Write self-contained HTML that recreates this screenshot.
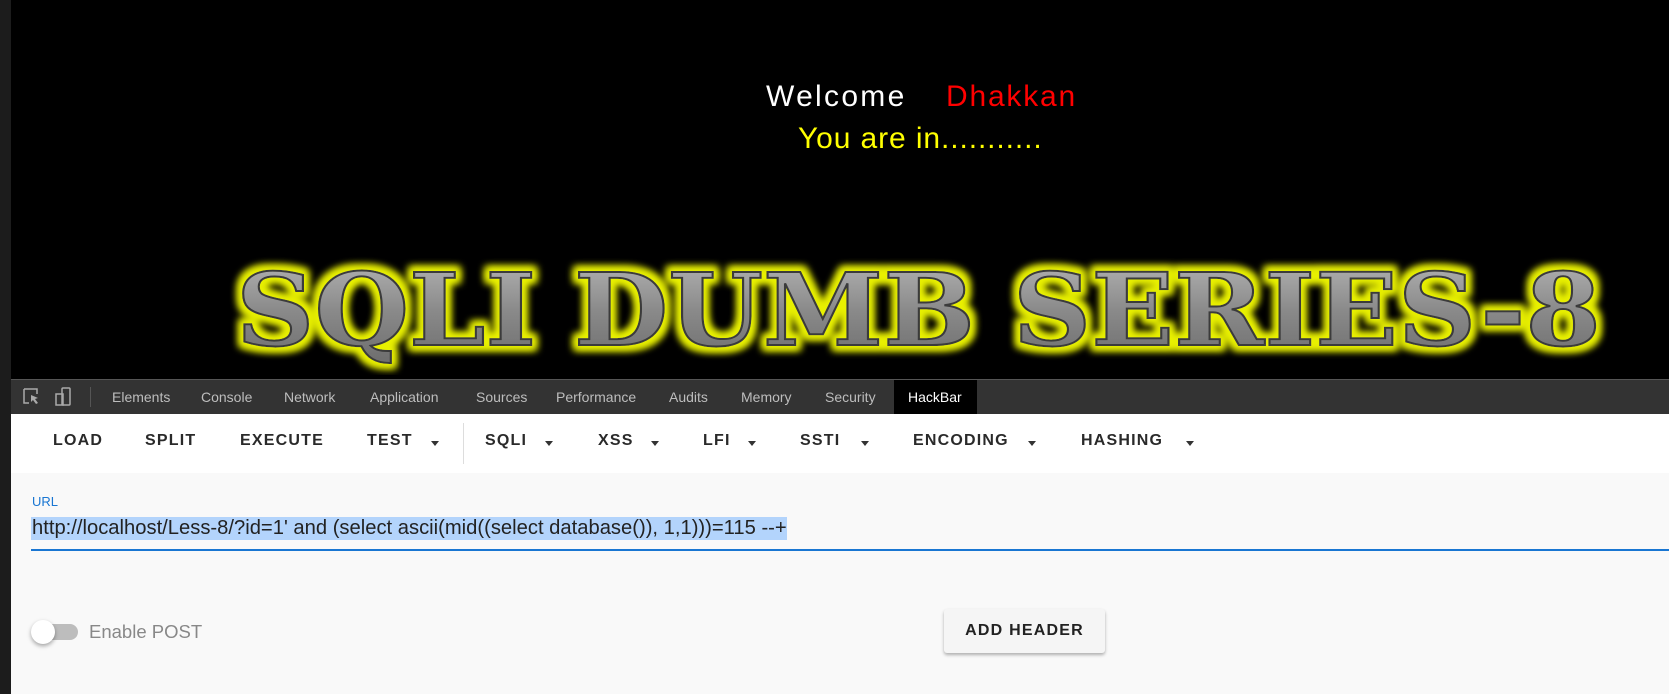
<!DOCTYPE html>
<html><head><meta charset="utf-8"><style>
*{margin:0;padding:0;box-sizing:border-box}
body{width:1669px;height:694px;overflow:hidden;background:#000;font-family:"Liberation Sans",sans-serif;position:relative}
.a{position:absolute;white-space:nowrap}
.tab{position:absolute;top:380px;height:34px;line-height:34px;color:#bdbdbd;font-size:14px}
.btn{position:absolute;top:432px;font-size:16px;font-weight:bold;letter-spacing:1.2px;color:#2a2a2a}
.arr{position:absolute;top:441px;width:0;height:0;border-left:4px solid transparent;border-right:4px solid transparent;border-top:5px solid #333}
</style></head><body>
<div class="a" style="left:0;top:0;width:11px;height:694px;background:#1c1c1c"></div>
<div class="a" style="left:766px;top:80px;font-size:30px;color:#fff;letter-spacing:2.3px">Welcome</div>
<div class="a" style="left:946px;top:80px;font-size:30px;color:#f00;letter-spacing:1.8px">Dhakkan</div>
<div class="a" style="left:798px;top:122px;font-size:30px;color:#ff0;letter-spacing:0.9px">You are in...........</div>
<svg class="a" style="left:220px;top:245px" width="1420" height="130">
<defs>
<linearGradient id="g" x1="0" y1="0" x2="0" y2="1"><stop offset="0" stop-color="#b8b8b8"/><stop offset="0.5" stop-color="#8a8a8a"/><stop offset="1" stop-color="#6a6a6a"/></linearGradient>
<filter id="f" x="-5%" y="-30%" width="110%" height="160%"><feMorphology in="SourceAlpha" operator="dilate" radius="4" result="d"/><feGaussianBlur in="d" stdDeviation="4" result="b"/><feFlood flood-color="#e8f000"/><feComposite in2="b" operator="in" result="y"/><feMerge><feMergeNode in="y"/><feMergeNode in="y"/><feMergeNode in="SourceGraphic"/></feMerge></filter>
</defs>
<text x="16" y="100" font-family="DejaVu Serif" font-weight="bold" font-size="100" textLength="1365" lengthAdjust="spacingAndGlyphs" fill="url(#g)" stroke="#3a3a3a" stroke-width="2" filter="url(#f)">SQLI DUMB SERIES-8</text>
</svg>
<div class="a" style="left:11px;top:379px;width:1658px;height:35px;background:#333;border-top:1px solid #555"></div>
<svg class="a" style="left:22px;top:387px" width="50" height="20"><path d="M2 2h13v5M2 2v14h5" fill="none" stroke="#aaa" stroke-width="1.5"/><path d="M9 8l7 3-3 1 3 4-2 1-3-4-2 2z" fill="#aaa"/><rect x="40" y="1" width="8" height="17" rx="1" fill="none" stroke="#aaa" stroke-width="1.5"/><rect x="34" y="7" width="7" height="11" fill="none" stroke="#aaa" stroke-width="1.5"/></svg>
<div class="a" style="left:90px;top:387px;width:1px;height:20px;background:#555"></div>
<div class="tab" style="left:112px">Elements</div>
<div class="tab" style="left:201px">Console</div>
<div class="tab" style="left:284px">Network</div>
<div class="tab" style="left:370px">Application</div>
<div class="tab" style="left:476px">Sources</div>
<div class="tab" style="left:556px">Performance</div>
<div class="tab" style="left:669px">Audits</div>
<div class="tab" style="left:741px">Memory</div>
<div class="tab" style="left:825px">Security</div>
<div class="tab" style="left:894px;width:83px;background:#000;color:#fff;padding-left:14px">HackBar</div>
<div class="a" style="left:11px;top:414px;width:1658px;height:59px;background:#fff"></div>
<div class="btn" style="left:53px">LOAD</div>
<div class="btn" style="left:145px">SPLIT</div>
<div class="btn" style="left:240px">EXECUTE</div>
<div class="btn" style="left:367px">TEST</div><div class="arr" style="left:431px"></div>
<div class="a" style="left:463px;top:423px;width:1px;height:41px;background:#ddd"></div>
<div class="btn" style="left:485px">SQLI</div><div class="arr" style="left:545px"></div>
<div class="btn" style="left:598px">XSS</div><div class="arr" style="left:651px"></div>
<div class="btn" style="left:703px">LFI</div><div class="arr" style="left:748px"></div>
<div class="btn" style="left:800px">SSTI</div><div class="arr" style="left:861px"></div>
<div class="btn" style="left:913px">ENCODING</div><div class="arr" style="left:1028px"></div>
<div class="btn" style="left:1081px">HASHING</div><div class="arr" style="left:1186px"></div>
<div class="a" style="left:11px;top:473px;width:1658px;height:221px;background:#f9f9f9"></div>
<div class="a" style="left:32px;top:494px;font-size:13px;color:#1976d2">URL</div>
<div class="a" style="left:31px;top:517px;width:756px;height:23px;background:#b3d4fc"></div>
<div class="a" style="left:32px;top:517px;font-size:20.2px;color:#222">http://localhost/Less-8/?id=1' and (select ascii(mid((select database()), 1,1)))=115 --+</div>
<div class="a" style="left:31px;top:549px;width:1638px;height:2px;background:#1976d2"></div>
<div class="a" style="left:34px;top:624px;width:44px;height:16px;border-radius:8px;background:#bdbdbd"></div>
<div class="a" style="left:31px;top:620px;width:24px;height:24px;border-radius:50%;background:#fff;box-shadow:0 2px 4px rgba(0,0,0,.35)"></div>
<div class="a" style="left:89px;top:621px;font-size:18.5px;color:#888">Enable POST</div>
<div class="a" style="left:944px;top:609px;width:161px;height:44px;background:#f5f5f5;border-radius:3px;box-shadow:0 2px 3px rgba(0,0,0,.3);font-size:16px;font-weight:bold;letter-spacing:1.2px;color:#222;text-align:center;line-height:44px">ADD HEADER</div>
</body></html>
